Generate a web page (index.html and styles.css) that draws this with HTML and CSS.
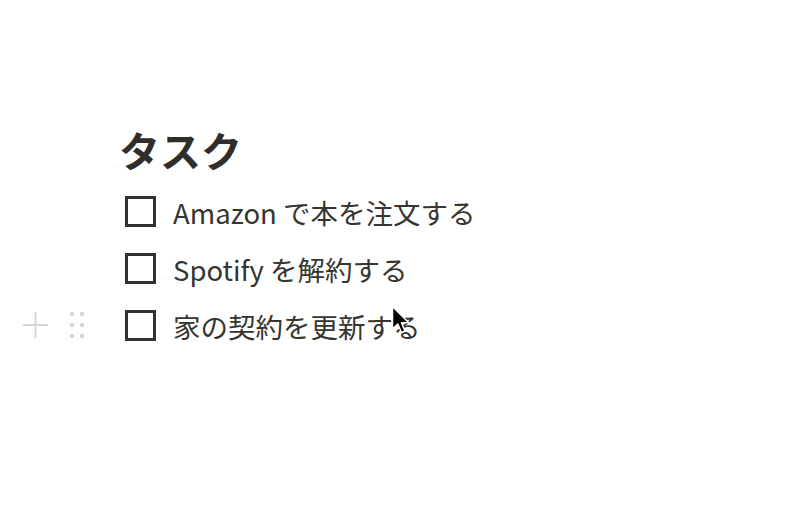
FILE: index.html
```html
<!DOCTYPE html>
<html lang="ja">
<head>
<meta charset="utf-8">
<link rel="stylesheet" href="styles.css">
</head>
<body>
<div class="page">
  <h1 class="title">タスク</h1>
  <ul class="todos">
    <li class="todo"><span class="box"></span><span class="label">Amazon で本を注文する</span></li>
    <li class="todo"><span class="box"></span><span class="label">Spotify を解約する</span></li>
    <li class="todo hovered">
      <span class="handles">
        <svg class="plus" width="27" height="28" viewBox="0 0 27 28"><path d="M13.5 1v26M1 14h25" stroke="#d6d6d4" stroke-width="2" fill="none"/></svg>
        <svg class="drag" width="16" height="28" viewBox="0 0 16 28"><g fill="#d6d6d4"><circle cx="3" cy="3" r="2.2"/><circle cx="13" cy="3" r="2.2"/><circle cx="3" cy="14" r="2.2"/><circle cx="13" cy="14" r="2.2"/><circle cx="3" cy="25" r="2.2"/><circle cx="13" cy="25" r="2.2"/></g></svg>
      </span>
      <span class="box"></span><span class="label">家の契約を更新する</span>
    </li>
  </ul>
</div>
<svg class="cursor" width="22" height="32" viewBox="0 0 22 32"><path d="M1.5 1.5 L1.5 24 L6.8 19 L10.5 27.5 L14 26 L10.4 17.8 L17.5 17.5 Z" fill="#000" stroke="#fff" stroke-width="1.5" stroke-linejoin="round"/></svg>
</body>
</html>
```
FILE: styles.css
```css
html, body {
  margin: 0;
  padding: 0;
  background: #fff;
}
body {
  font-family: "Noto Sans CJK JP", "Noto Sans", sans-serif;
  color: #37352f;
  width: 800px;
  height: 506px;
  overflow: hidden;
  position: relative;
}
.page {
  padding: 119px 0 0 119px;
}
.title {
  margin: 0 0 4px 0;
  font-size: 41px;
  font-weight: 700;
  line-height: 60px;
  color: #2f2e2b;
}
.todos {
  list-style: none;
  margin: 0;
  padding: 0;
}
.todo {
  display: flex;
  align-items: center;
  height: 57px;
  position: relative;
  padding-left: 6px;
}
.box {
  width: 31px;
  height: 31px;
  box-sizing: border-box;
  border: 3px solid #333230;
  flex: none;
}
.label {
  margin-left: 17px;
  font-size: 27.5px;
  line-height: 40px;
  color: #37352f;
}
.handles {
  position: absolute;
  left: -97px;
  top: 14px;
  display: flex;
  align-items: center;
  gap: 20px;
}
.cursor {
  position: absolute;
  left: 391px;
  top: 305px;
}
```
